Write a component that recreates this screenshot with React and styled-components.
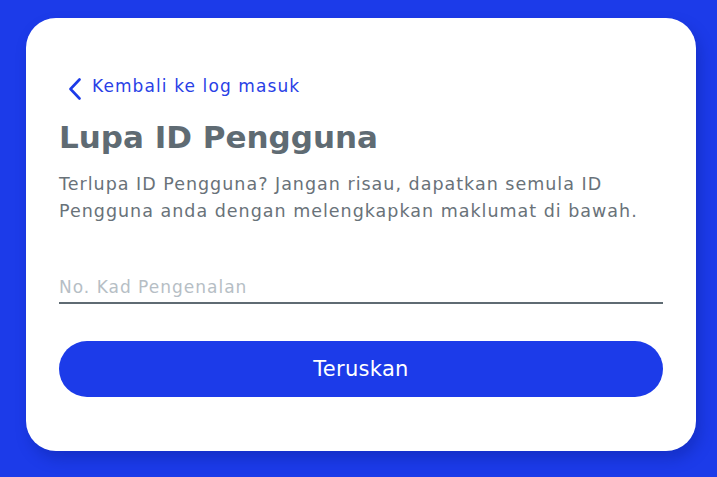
import React, { useState } from 'react';
import styled, { createGlobalStyle } from 'styled-components';

const GlobalStyle = createGlobalStyle`
  html, body {
    margin: 0;
    padding: 0;
    background: #1c3be9;
  }
  body {
    font-family: "DejaVu Sans", "Open Sans", sans-serif;
  }
`;

const Page = styled.div`
  min-height: 477px;
  box-sizing: border-box;
  padding: 18px 21px 26px 26px;
`;

const Card = styled.div`
  width: 670px;
  height: 433px;
  box-sizing: border-box;
  padding: 56px 33px 0;
  background: #fff;
  border-radius: 30px;
  box-shadow: 4px 8px 14px rgba(10, 30, 140, 0.35);
  display: flex;
  flex-direction: column;
  > * {
    flex-shrink: 0;
  }
`;

const BackLink = styled.a`
  display: flex;
  align-items: center;
  gap: 10px;
  height: 24px;
  color: #2a3fe6;
  font-size: 17px;
  letter-spacing: 1.1px;
  text-decoration: none;
  cursor: pointer;
  svg {
    margin: 6px 0 0 9px;
    flex-shrink: 0;
  }
`;

const Title = styled.h1`
  margin: 21px 0 0;
  font-size: 31px;
  line-height: 36px;
  font-weight: 700;
  color: #5f6b73;
`;

const Description = styled.p`
  margin: 16px 0 0;
  font-size: 17.5px;
  letter-spacing: 1px;
  line-height: 27px;
  color: #697279;
  white-space: nowrap;
`;

const Input = styled.input`
  margin-top: 47px;
  height: 30px;
  padding: 0;
  border: none;
  border-bottom: 2px solid #5f6b73;
  outline: none;
  font-family: inherit;
  font-size: 17px;
  letter-spacing: 1px;
  color: #4a545b;
  background: transparent;
  caret-color: #333;
  &::placeholder {
    color: #b6bec5;
  }
`;

const Button = styled.button`
  margin-top: 37px;
  height: 56px;
  border: none;
  border-radius: 28px;
  background: #1c3be9;
  color: #fff;
  font-family: inherit;
  font-size: 21px;
  letter-spacing: 0.3px;
  cursor: pointer;
`;

const Chevron = () => (
  <svg width="14" height="22" viewBox="0 0 14 22" fill="none">
    <path d="M11.5 1.5 L2.5 11 L11.5 20.5" stroke="#1c3be9" strokeWidth="2.6" strokeLinecap="round" strokeLinejoin="round" />
  </svg>
);

export default function App() {
  const [ic, setIc] = useState('');
  return (
    <Page>
      <GlobalStyle />
      <Card>
        <BackLink>
          <Chevron />
          Kembali ke log masuk
        </BackLink>
        <Title>Lupa ID Pengguna</Title>
        <Description>
          Terlupa ID Pengguna? Jangan risau, dapatkan semula ID
          <br />
          Pengguna anda dengan melengkapkan maklumat di bawah.
        </Description>
        <Input
          autoFocus
          placeholder="No. Kad Pengenalan"
          value={ic}
          onChange={e => setIc(e.target.value)}
        />
        <Button>Teruskan</Button>
      </Card>
    </Page>
  );
}
